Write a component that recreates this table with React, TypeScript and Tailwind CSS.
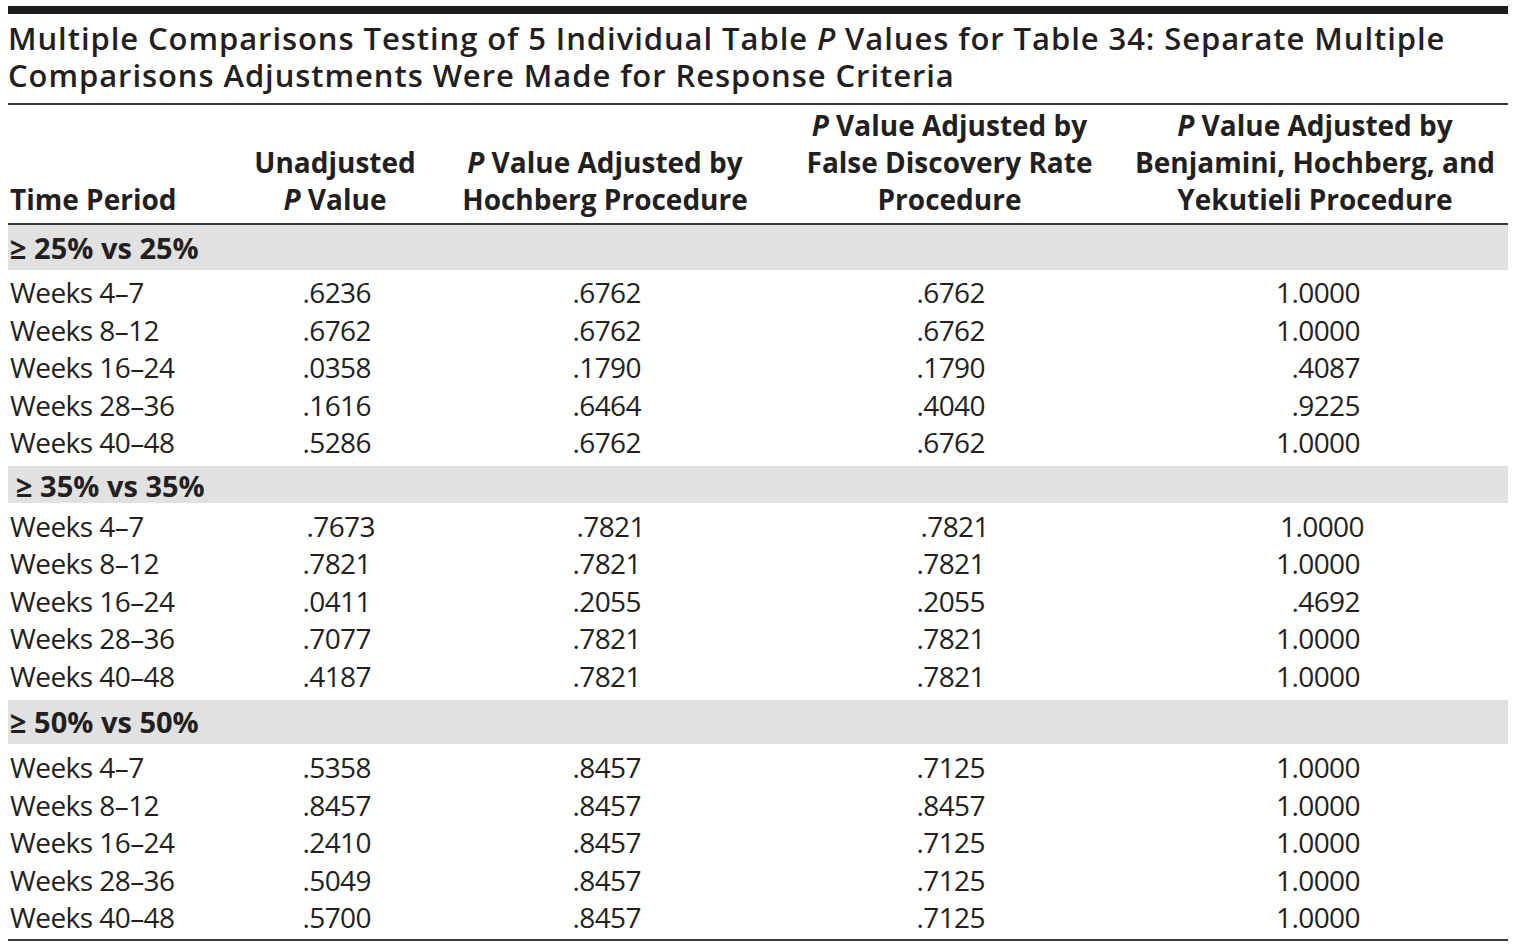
type Row = { period: string; vals: string[]; shift?: boolean };
type Group = { label: string; shift?: boolean; band: string; label2?: string; rows: Row[] };

const groups: Group[] = [
  {
    label: "≥ 25% vs 25%",
    band: "pb-[4px]",
    label2: "h-[45px]",
    rows: [
      { period: "Weeks 4–7", vals: [".6236", ".6762", ".6762", "1.0000"] },
      { period: "Weeks 8–12", vals: [".6762", ".6762", ".6762", "1.0000"] },
      { period: "Weeks 16–24", vals: [".0358", ".1790", ".1790", ".4087"] },
      { period: "Weeks 28–36", vals: [".1616", ".6464", ".4040", ".9225"] },
      { period: "Weeks 40–48", vals: [".5286", ".6762", ".6762", "1.0000"] },
    ],
  },
  {
    label: "≥ 35% vs 35%",
    shift: true,
    band: "pt-[4px] pb-[5px]",
    label2: "h-[37px] pt-[4px]",
    rows: [
      { period: "Weeks 4–7", vals: [".7673", ".7821", ".7821", "1.0000"], shift: true },
      { period: "Weeks 8–12", vals: [".7821", ".7821", ".7821", "1.0000"] },
      { period: "Weeks 16–24", vals: [".0411", ".2055", ".2055", ".4692"] },
      { period: "Weeks 28–36", vals: [".7077", ".7821", ".7821", "1.0000"] },
      { period: "Weeks 40–48", vals: [".4187", ".7821", ".7821", "1.0000"] },
    ],
  },
  {
    label: "≥ 50% vs 50%",
    band: "pt-[5px] pb-[5px]",
    label2: "h-[44px]",
    rows: [
      { period: "Weeks 4–7", vals: [".5358", ".8457", ".7125", "1.0000"] },
      { period: "Weeks 8–12", vals: [".8457", ".8457", ".8457", "1.0000"] },
      { period: "Weeks 16–24", vals: [".2410", ".8457", ".7125", "1.0000"] },
      { period: "Weeks 28–36", vals: [".5049", ".8457", ".7125", "1.0000"] },
      { period: "Weeks 40–48", vals: [".5700", ".8457", ".7125", "1.0000"] },
    ],
  },
];

const cols = "grid grid-cols-[229px_196px_344px_345px_386px]";
// right edge padding for each value column, measured off the print
const valPad = ["pr-[62px]", "pr-[136px]", "pr-[137px]", "pr-[148px]"];
const valPadShift = ["pr-[58px]", "pr-[132px]", "pr-[133px]", "pr-[144px]"];

const P = () => <i>P</i>;

function DataRow({ row }: { row: Row }) {
  const pads = row.shift ? valPadShift : valPad;
  return (
    <div className={`${cols} h-[37.5px] items-center text-[28px] leading-[37.5px] tracking-[-0.02em]`}>
      <div className="pl-[2px] whitespace-nowrap">{row.period}</div>
      {row.vals.map((v, i) => (
        <div key={i} className={`text-right ${pads[i]}`}>
          {v}
        </div>
      ))}
    </div>
  );
}

export default function App() {
  return (
    <div className="bg-white min-h-[949px] px-2 pt-[6px] text-[#231f20] font-['Open_Sans',sans-serif]">
      <div className="w-[1500px]">
        <div className="h-[8px] bg-[#1c1c1c]" />

        <h1 className="pt-[6px] pb-[9px] text-[31px] leading-[37px] tracking-[0.03em] font-semibold whitespace-nowrap border-b-2 border-[#3a3a3a]">
          Multiple Comparisons Testing of 5 Individual Table <P /> Values for Table 34: Separate Multiple
          <br />
          Comparisons Adjustments Were Made for Response Criteria
        </h1>

        <div className={`${cols} h-[120px] items-end pb-[5px] text-[28px] leading-[37px] font-bold border-b-2 border-[#3a3a3a]`}>
          <div className="pl-[2px]">Time Period</div>
          <div className="text-center">
            Unadjusted
            <br />
            <P /> Value
          </div>
          <div className="text-center">
            <P /> Value Adjusted by
            <br />
            Hochberg Procedure
          </div>
          <div className="text-center">
            <P /> Value Adjusted by
            <br />
            False Discovery Rate
            <br />
            Procedure
          </div>
          <div className="text-center">
            <P /> Value Adjusted by
            <br />
            Benjamini, Hochberg, and
            <br />
            Yekutieli Procedure
          </div>
        </div>

        {groups.map((g) => (
          <div key={g.label}>
            <div className={g.band}>
              <div
                className={`flex items-center bg-[#e1e1e1] text-[29px] font-bold ${g.label2} ${
                  g.shift ? "pl-[8px]" : "pl-[2px]"
                }`}
              >
                {g.label}
              </div>
            </div>
            {g.rows.map((r) => (
              <DataRow key={r.period} row={r} />
            ))}
          </div>
        ))}

        <div className="mt-[2px] border-b-2 border-[#3a3a3a]" />
      </div>
    </div>
  );
}
